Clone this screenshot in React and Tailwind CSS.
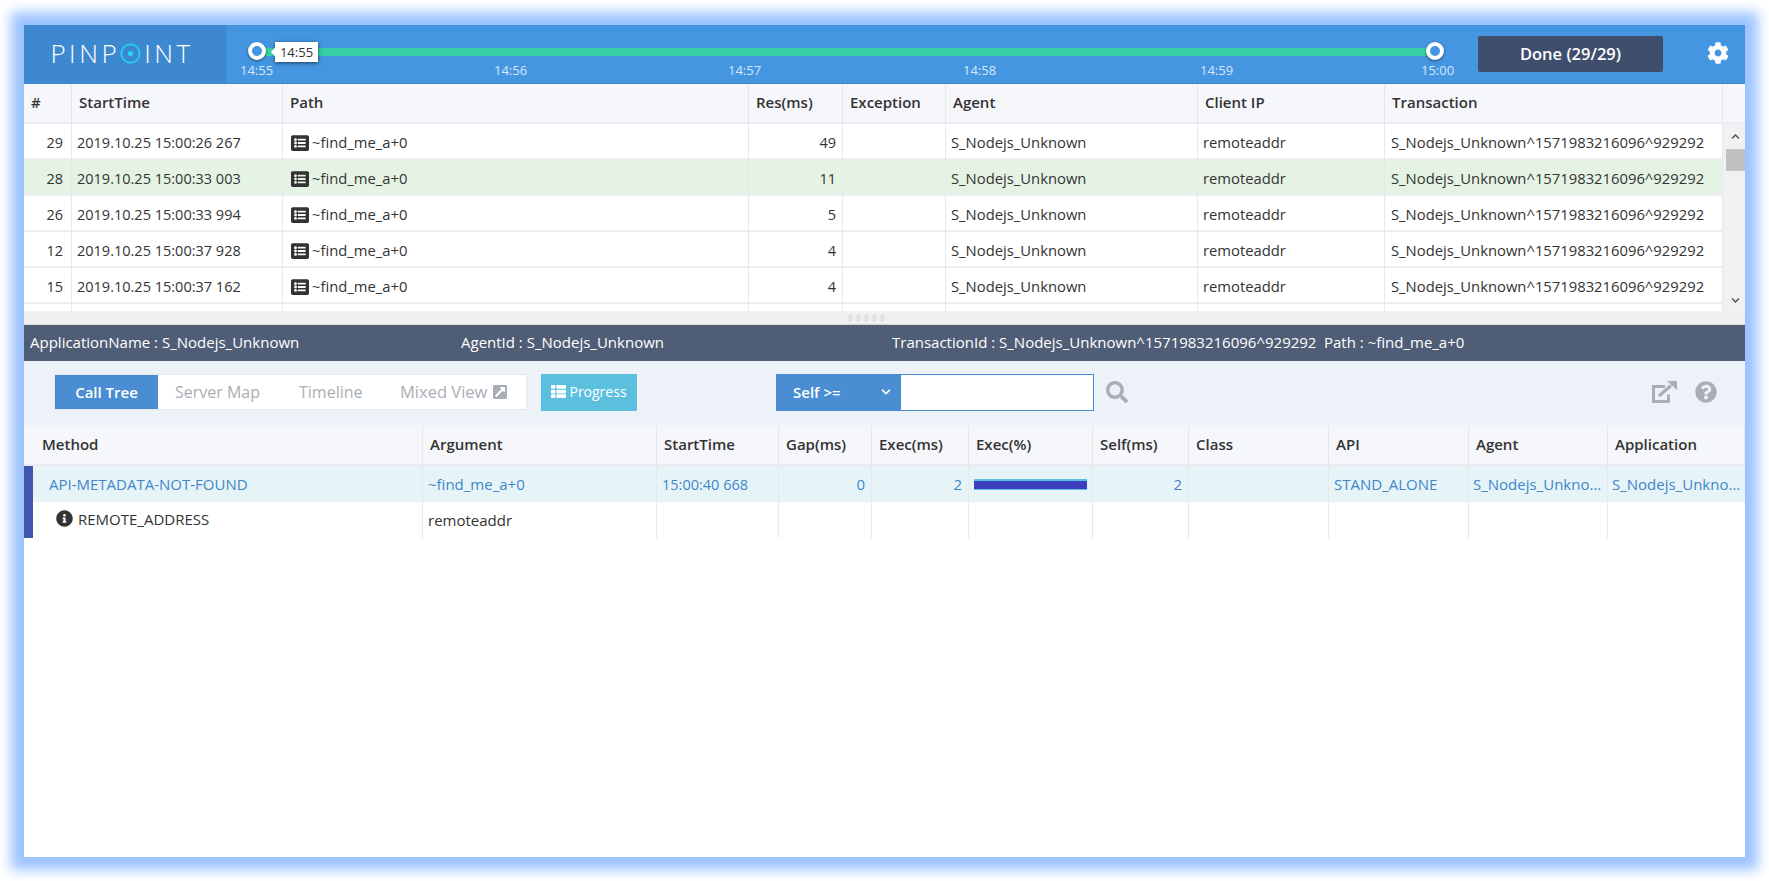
import React from "react"
import {
  FaCog,
  FaListAlt,
  FaInfoCircle,
  FaThList,
  FaExternalLinkSquareAlt,
  FaSearch,
  FaQuestionCircle,
  FaChevronDown,
  FaChevronUp,
} from "react-icons/fa"

const listCols = "grid grid-cols-[48px_211px_466px_94px_103px_252px_187px_338px]"
const treeCols = "grid grid-cols-[399px_234px_122px_93px_97px_124px_96px_140px_140px_139px_137px]"

const listHeaders = ["#", "StartTime", "Path", "Res(ms)", "Exception", "Agent", "Client IP", "Transaction"]
const treeHeaders = ["Method", "Argument", "StartTime", "Gap(ms)", "Exec(ms)", "Exec(%)", "Self(ms)", "Class", "API", "Agent", "Application"]

// label spacing on the time axis is not even
const ticks = [
  { label: "14:55", width: "w-[254px]" },
  { label: "14:56", width: "w-[234px]" },
  { label: "14:57", width: "w-[235px]" },
  { label: "14:58", width: "w-[237px]" },
  { label: "14:59", width: "w-[221px]" },
  { label: "15:00", width: "w-[33px]" },
]

const transactions = [
  { id: 29, time: "2019.10.25 15:00:26 267", res: 49 },
  { id: 28, time: "2019.10.25 15:00:33 003", res: 11, selected: true },
  { id: 26, time: "2019.10.25 15:00:33 994", res: 5 },
  { id: 12, time: "2019.10.25 15:00:37 928", res: 4 },
  { id: 15, time: "2019.10.25 15:00:37 162", res: 4 },
]

function Handle({ className }) {
  return (
    <div className={`absolute top-[17px] w-[18px] h-[18px] rounded-full bg-[#4496e1] border-[4px] border-white shadow-[0_1px_3px_rgba(0,0,0,0.5)] ${className}`} />
  )
}

function Header() {
  return (
    <div className="flex h-[59px] shrink-0 bg-[#4496e1] border-b border-[#3e88cf]">
      <div className="w-[203px] bg-[#3e88cf] border-r border-[#4190d8] flex items-center justify-center pr-[6px] pb-[2px] text-white font-light text-[26px] leading-none tracking-[3.5px]">
        PINP
        <svg viewBox="0 0 24 24" className="w-[21px] h-[21px] mr-[3px]">
          <circle cx="12" cy="12" r="10.5" fill="none" stroke="#1fd6f7" strokeWidth="2" />
          <circle cx="12" cy="12" r="3" fill="#1fd6f7" />
        </svg>
        INT
      </div>
      <div className="relative w-[1251px]">
        <div className="absolute left-[30px] top-[23px] w-[1178px] h-[8px] bg-[#37cfa3]" />
        <Handle className="left-[21px]" />
        <Handle className="left-[1199px]" />
        <div className="absolute left-[48px] top-[17px] h-[20px] w-[43px] bg-white text-[#333] text-[13px] leading-[20px] text-center shadow-[0_1px_4px_rgba(0,0,0,0.6)]">
          14:55
          <div className="absolute left-[-3px] top-[7px] w-[6px] h-[6px] rotate-45 bg-white" />
        </div>
        <div className="absolute left-[13px] top-[37px] flex text-[13px] leading-[17px] text-[#d6e7f8]">
          {ticks.map((t) => (
            <span key={t.label} className={t.width}>{t.label}</span>
          ))}
        </div>
      </div>
      <div className="mt-[11px] w-[185px] h-[36px] rounded-[2px] bg-[#3f4e6d] text-white text-[16.5px] font-semibold leading-[36px] text-center">
        Done (29/29)
      </div>
      <div className="flex-1 flex items-center justify-center pl-[27px] pb-[2px]">
        <FaCog className="text-white text-[22px]" />
      </div>
    </div>
  )
}

function TransactionList() {
  return (
    <div className="h-[227px] shrink-0 overflow-hidden">
      <div className="flex h-[40px] bg-[#f6f7fb] border-b-[2px] border-[#e9ebf0]">
        <div className={`${listCols} flex-1`}>
          {listHeaders.map((h) => (
            <div key={h} className="pl-[7px] border-r border-[#e6e8ee] text-[15px] font-semibold text-[#333] leading-[36px] whitespace-nowrap">
              {h}
            </div>
          ))}
        </div>
        <div className="w-[22px]" />
      </div>
      <div className="flex h-[187px]">
        <div className="flex-1 overflow-hidden">
          {transactions.map((row) => (
            <div
              key={row.id}
              className={`${listCols} h-[36px] border-b-[2px] border-[#eceef2] text-[14.8px] text-[#333] leading-[37px] ${row.selected ? "bg-[#e5f3e5]" : "bg-white"}`}
            >
              <div className="pr-[8px] text-right border-r border-[#e6e8ee] text-[14.5px]">{row.id}</div>
              <div className="pl-[5px] border-r border-[#e6e8ee] whitespace-nowrap text-[14.5px]">{row.time}</div>
              <div className="pl-[8px] border-r border-[#e6e8ee] flex items-center gap-[3px]">
                <FaListAlt className="text-[#333] text-[18px]" />
                ~find_me_a+0
              </div>
              <div className="px-[6px] text-right border-r border-[#e6e8ee] text-[14.5px]">{row.res}</div>
              <div className="border-r border-[#e6e8ee]" />
              <div className="pl-[5px] border-r border-[#e6e8ee]">S_Nodejs_Unknown</div>
              <div className="pl-[5px] border-r border-[#e6e8ee]">remoteaddr</div>
              <div className="pl-[6px] border-r border-[#e6e8ee] whitespace-nowrap">S_Nodejs_Unknown^1571983216096^929292</div>
            </div>
          ))}
          <div className={`${listCols} h-[36px] bg-white`}>
            {listHeaders.map((h) => (
              <div key={h} className="border-r border-[#e6e8ee]" />
            ))}
          </div>
        </div>
        <div className="w-[22px] bg-[#f1f1f1] flex flex-col items-end">
          <div className="w-full h-[25px] flex items-center justify-center pl-[3px]">
            <FaChevronUp className="text-[#505050] text-[9px]" />
          </div>
          <div className="w-[19px] h-[22px] bg-[#c1c1c1]" />
          <div className="flex-1" />
          <div className="w-full h-[22px] flex items-center justify-center pl-[3px]">
            <FaChevronDown className="text-[#505050] text-[9px]" />
          </div>
        </div>
      </div>
    </div>
  )
}

function Splitter() {
  return (
    <div className="h-[14px] shrink-0 bg-[#f0f0f0] border-b border-[#d8d8d8] flex items-center justify-center gap-[5px] pr-[36px]">
      {[0, 1, 2, 3, 4].map((i) => (
        <div key={i} className="w-[3px] h-[6px] border border-[#d5d5d5]" />
      ))}
    </div>
  )
}

function InfoBar() {
  return (
    <div className="flex h-[36px] shrink-0 bg-[#4f5d76] text-white text-[15px] leading-[35px] pl-[6px] whitespace-nowrap">
      <span className="w-[431px]">ApplicationName : S_Nodejs_Unknown</span>
      <span className="w-[431px]">AgentId : S_Nodejs_Unknown</span>
      <span className="w-[432px]">TransactionId : S_Nodejs_Unknown^1571983216096^929292</span>
      <span>Path : ~find_me_a+0</span>
    </div>
  )
}

function Toolbar() {
  return (
    <div className="flex items-center h-[64px] shrink-0 bg-[#edf2f8] pl-[30px] pr-[28px] pb-[2px] text-[14px]">
      <div className="flex h-[36px] w-[473px] bg-white border border-[#e4e8ee] text-[#a9aeb5] text-[16px] whitespace-nowrap">
        <div className="w-[103px] bg-[#4a8dd3] text-white text-center leading-[34px] font-semibold text-[15px]">Call Tree</div>
        <div className="ml-[17px] w-[124px] leading-[34px]">Server Map</div>
        <div className="w-[101px] leading-[34px]">Timeline</div>
        <div className="flex items-center gap-[5px] leading-[34px] text-[16.5px]">
          Mixed View
          <FaExternalLinkSquareAlt className="text-[#a9aeb5] text-[16px]" />
        </div>
      </div>
      <div className="ml-[14px] w-[96px] h-[37px] bg-[#5bc0de] text-white flex items-center justify-center gap-[3px] pb-[1px]">
        <FaThList className="text-[15px]" />
        Progress
      </div>
      <div className="ml-[139px] flex w-[318px] h-[37px] border border-[#4a8dd3]">
        <div className="w-[124px] bg-[#4a8dd3] text-white font-semibold text-[15px] flex items-center justify-between pl-[16px] pr-[10px]">
          Self &gt;=
          <FaChevronDown className="text-[10px]" />
        </div>
        <div className="flex-1 bg-white" />
      </div>
      <FaSearch className="ml-[12px] text-[#a9aeb5] text-[22px]" />
      <svg viewBox="0 0 26 22" className="ml-auto w-[26px] h-[22px]" fill="none" stroke="#a9aeb5" strokeWidth="3">
        <path d="M13 5.5H1.5v15h15v-7" />
        <path d="M7 15 19 4.5" />
        <path d="M15 0h10v9z" fill="#a9aeb5" stroke="none" />
      </svg>
      <FaQuestionCircle className="ml-[17px] text-[#a9aeb5] text-[22px]" />
    </div>
  )
}

function CallTree() {
  const rowText = "text-[15px] leading-[37px] whitespace-nowrap overflow-hidden"
  return (
    <div className="flex-1 bg-white">
      <div className={`${treeCols} h-[41px] bg-[#f6f7fb] border-b-[2px] border-[#e9ebf0]`}>
        {treeHeaders.map((h, i) => (
          <div
            key={h}
            className={`border-r border-[#e6e8ee] text-[15px] font-semibold text-[#333] leading-[38px] whitespace-nowrap ${i === 0 ? "pl-[18px]" : "pl-[7px]"}`}
          >
            {h}
          </div>
        ))}
      </div>
      <div className={`${treeCols} h-[36px] bg-[#e6f4f8] text-[#3f86c9] ${rowText}`}>
        <div className="border-l-[9px] border-[#3f57ae] pl-[16px] border-r-[#e6e8ee] border-r">API-METADATA-NOT-FOUND</div>
        <div className="pl-[5px] border-r border-[#e6e8ee]">~find_me_a+0</div>
        <div className="pl-[5px] border-r border-[#e6e8ee] text-[14.5px]">15:00:40 668</div>
        <div className="pr-[6px] text-right border-r border-[#e6e8ee]">0</div>
        <div className="pr-[6px] text-right border-r border-[#e6e8ee]">2</div>
        <div className="px-[5px] pt-[13px] border-r border-[#e6e8ee]">
          <div className="h-[11px] border-t-[2px] border-b border-t-[#5bc0de] border-b-[#5bc0de] bg-[#3d3fbf]" />
        </div>
        <div className="pr-[6px] text-right border-r border-[#e6e8ee]">2</div>
        <div className="border-r border-[#e6e8ee]" />
        <div className="pl-[5px] border-r border-[#e6e8ee]">STAND_ALONE</div>
        <div className="pl-[4px] border-r border-[#e6e8ee]">S_Nodejs_Unkno...</div>
        <div className="pl-[4px]">S_Nodejs_Unkno...</div>
      </div>
      <div className={`${treeCols} h-[36px] text-[#333] ${rowText}`}>
        <div className="border-l-[9px] border-[#3f57ae] border-r-[#e6e8ee] border-r pl-[23px] flex items-center gap-[5px] leading-[20px] pb-[3px]">
          <FaInfoCircle className="text-[#333] text-[17px]" />
          REMOTE_ADDRESS
        </div>
        <div className="pl-[5px] border-r border-[#e6e8ee] leading-[36px]">remoteaddr</div>
        {treeHeaders.slice(2).map((h, i) => (
          <div key={h} className={i < 8 ? "border-r border-[#e6e8ee]" : ""} />
        ))}
      </div>
    </div>
  )
}

export default function App() {
  return (
    <div className="h-[881px] bg-white pt-[25px] pl-[24px] overflow-hidden font-['Open_Sans',sans-serif]">
      <div className="w-[1721px] h-[832px] flex flex-col bg-white shadow-[0_0_12px_13px_#9cc3ff]">
        <Header />
        <TransactionList />
        <Splitter />
        <InfoBar />
        <Toolbar />
        <CallTree />
      </div>
    </div>
  )
}
